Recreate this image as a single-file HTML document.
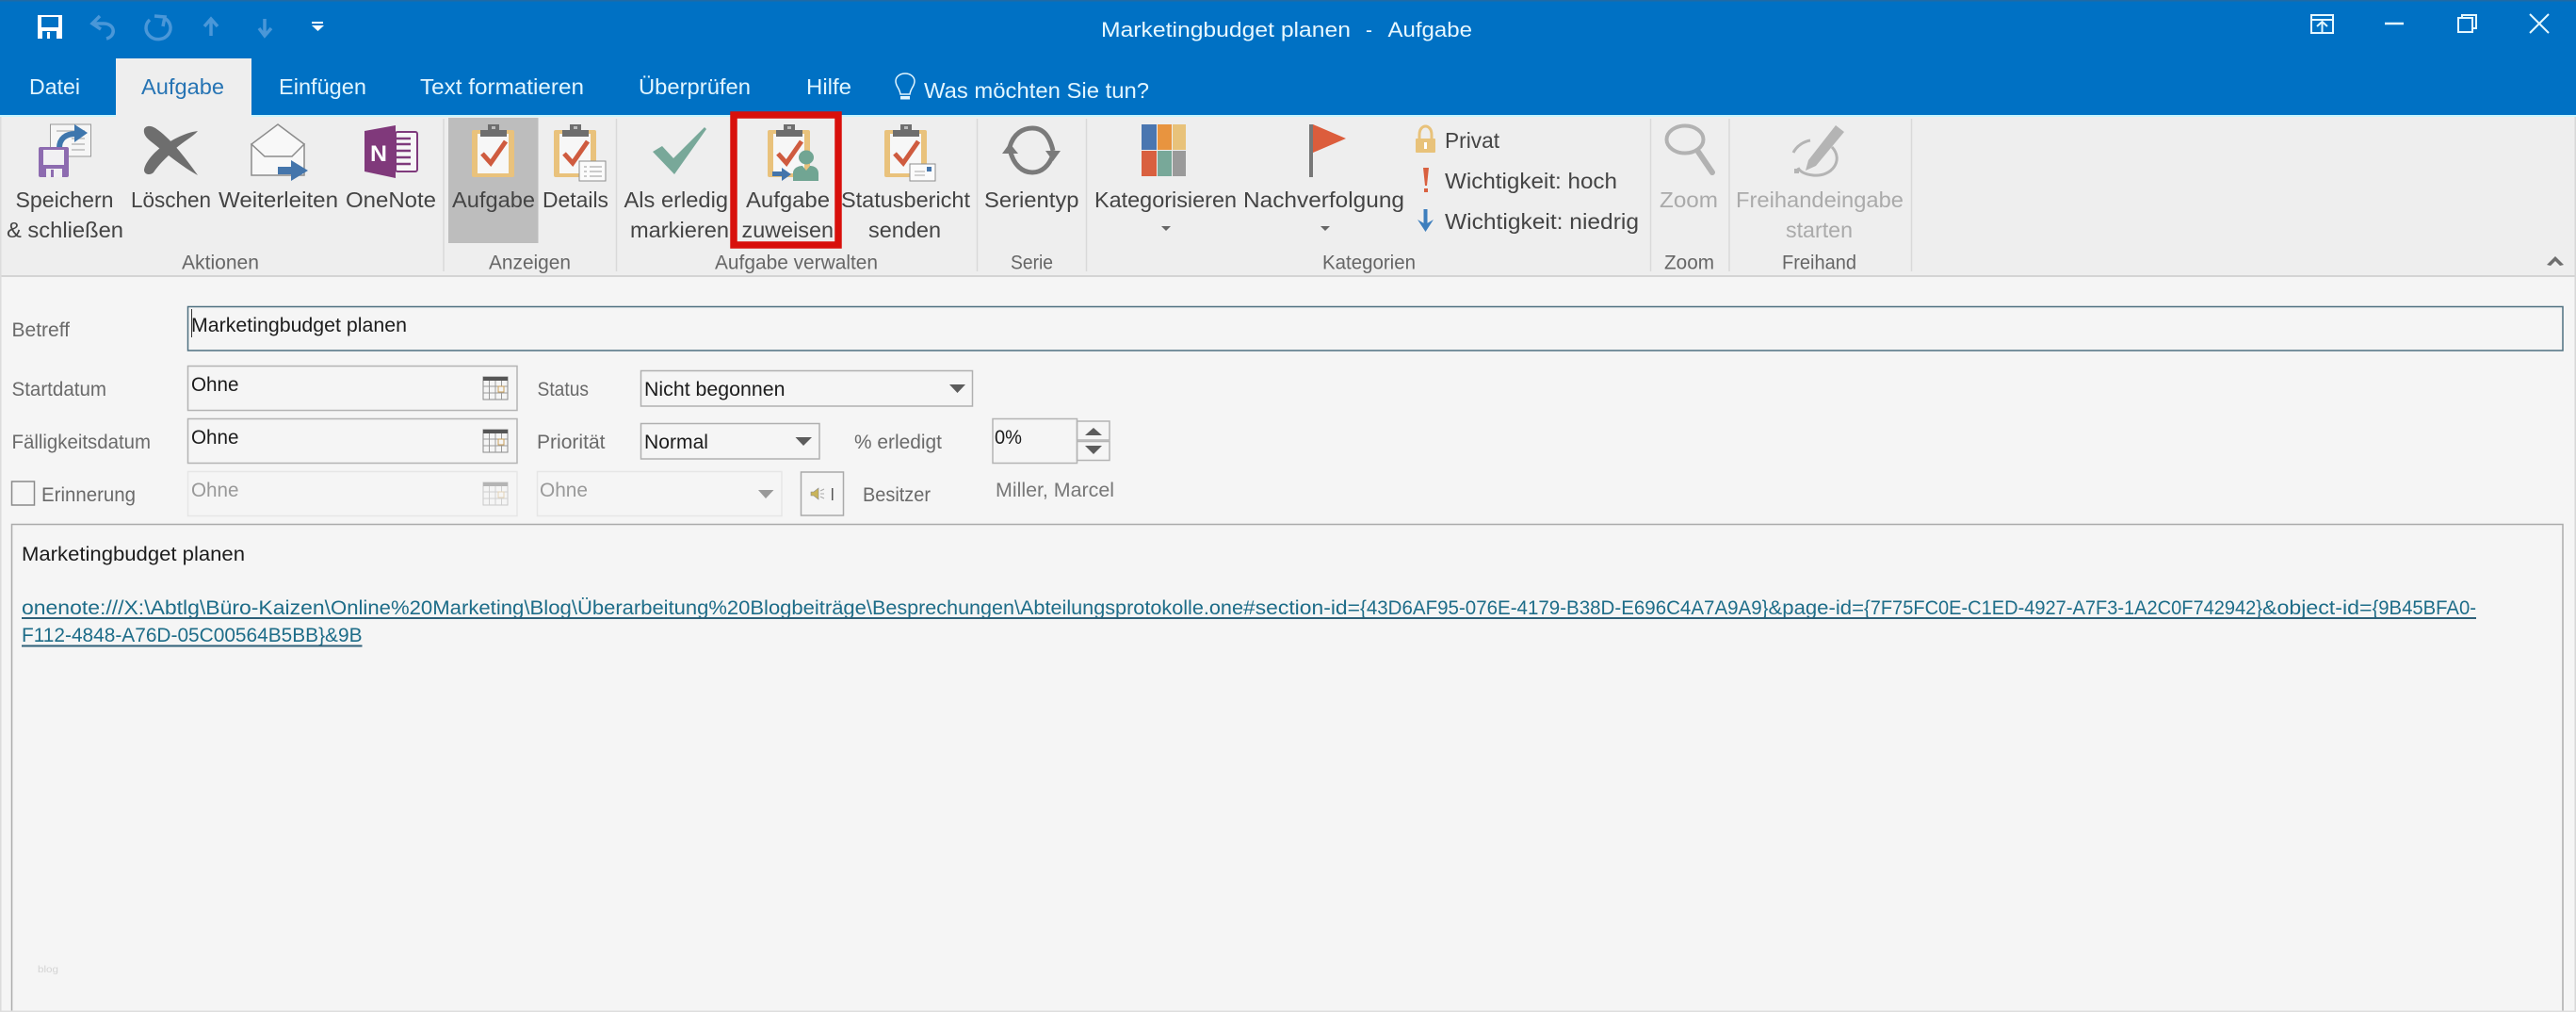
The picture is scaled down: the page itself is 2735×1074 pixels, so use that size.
<!DOCTYPE html>
<html lang="de"><head><meta charset="utf-8"><title>Marketingbudget planen - Aufgabe</title>
<style>
html,body{margin:0;padding:0;width:2735px;height:1074px;overflow:hidden;background:#f5f5f5}
svg{display:block}
text{font-family:"Liberation Sans",sans-serif;white-space:pre}
.t{font-size:23px;fill:#e2f6ff}
.r{font-size:23px;fill:#444}
.g{font-size:21px;fill:#666}
.d{font-size:23px;fill:#aaa}
.l{font-size:21px;fill:#6a6a6a}
.v{font-size:21px;fill:#1c1c1c}
.x{font-size:21px;fill:#999}
.u{font-size:21px;fill:#1d6c88}
</style></head><body>
<svg xmlns="http://www.w3.org/2000/svg" width="2735" height="1074" viewBox="0 0 2735 1074">
<defs>
<g id="clip">
<rect x="0" y="6" width="45" height="50" rx="2" fill="#e9c27c"/>
<rect x="6" y="10" width="33" height="42" fill="#f7f7f7"/>
<path d="M9 13V6H17V0H29V6H37V13Z" fill="#6e6e6e"/>
<rect x="21" y="2" width="4" height="3" fill="#bbb"/>
<path d="M11 31L20 41L36 18" fill="none" stroke="#cf5b3f" stroke-width="5"/>
</g>
<g id="cal">
<rect x="0" y="0" width="26" height="24" fill="#f5f5f5" stroke="#8a8a8a"/>
<rect x="0" y="0" width="26" height="4" fill="#555"/>
<path d="M6.5 4V24M13 4V24M19.500 4V24M0 10H26M0 17H26" stroke="#9a9a9a" fill="none"/>
<rect x="16" y="10" width="6" height="6" fill="#f5f5f5" stroke="#c9a05a"/>
</g>
</defs>

<rect width="2735" height="1074" fill="#f5f5f5"/>
<!-- title band -->
<rect width="2735" height="122" fill="#0071c4"/>
<rect width="2735" height="1.500" fill="#1f6aa5"/>
<rect y="122" width="2735" height="2" fill="#c6f5ff"/>
<rect y="124" width="2735" height="168" fill="#eeeeee"/>
<rect y="292" width="2735" height="2" fill="#d4d4d4"/>
<rect x="2733.500" y="124" width="1.500" height="950" fill="#d8d8d8"/>
<rect x="0" y="124" width="1.500" height="950" fill="#dcdcdc"/>
<rect x="123" y="62" width="144" height="63" fill="#eeeeee"/>

<!-- QAT -->
<path d="M40 16H66V41H40Z" fill="#fff"/>
<rect x="44" y="18" width="18" height="11" fill="#0071c4"/>
<rect x="45" y="33" width="15" height="8" fill="#0071c4"/>
<rect x="50" y="34" width="3" height="7" fill="#fff"/>
<g fill="none" stroke="#4a97d8" stroke-width="3.500">
<path d="M106 17L98 25L107 31"/><path d="M98 25H110C122 25 124 38 113 41"/>
<path d="M159 21A13 12 0 1 0 174 19M164 17L175 18L173 28"/>
<path d="M224 38V21M217 28L224 20L231 28"/>
<path d="M281 20V37M275 30L281 38L288 30"/>
</g>
<rect x="331" y="23" width="12" height="2" fill="#fff"/>
<path d="M331 27H344L337.500 33Z" fill="#fff"/>

<text x="1169" y="39" font-size="22.500" fill="#e8f8ff" textLength="265" lengthAdjust="spacingAndGlyphs">Marketingbudget planen</text>
<text x="1450" y="39" font-size="22.500" fill="#e8f8ff" textLength="7" lengthAdjust="spacingAndGlyphs">-</text>
<text x="1473.500" y="39" font-size="22.500" fill="#e8f8ff" textLength="89.500" lengthAdjust="spacingAndGlyphs">Aufgabe</text>

<!-- window controls -->
<g fill="none" stroke="#e4f8ff" stroke-width="2">
<rect x="2454" y="16" width="23" height="19"/><path d="M2454 21H2477M2465.500 34V24M2460 28L2465.500 23L2471 28"/>
<path d="M2532 25H2552" stroke-width="2.500"/>
<rect x="2610" y="19" width="15" height="15"/><path d="M2614 18V16H2629V30H2626"/>
<path d="M2686 15L2706 35M2706 15L2686 35"/>
</g>

<!-- tabs -->
<text class="t" x="31" y="100" textLength="54" lengthAdjust="spacingAndGlyphs">Datei</text>
<text class="t" x="150" y="100" textLength="88" lengthAdjust="spacingAndGlyphs" style="fill:#2674b4">Aufgabe</text>
<text class="t" x="296" y="100" textLength="93" lengthAdjust="spacingAndGlyphs">Einfügen</text>
<text class="t" x="446" y="100" textLength="174" lengthAdjust="spacingAndGlyphs">Text formatieren</text>
<text class="t" x="678" y="100" textLength="119" lengthAdjust="spacingAndGlyphs">Überprüfen</text>
<text class="t" x="856" y="100" textLength="48" lengthAdjust="spacingAndGlyphs">Hilfe</text>
<path d="M956 100C955 93 951 92 951 86A10 8 0 0 1 971 86C971 92 967 93 966 100Z" fill="none" stroke="#e2f6ff" stroke-width="1.500"/>
<rect x="956" y="102" width="10" height="3.500" fill="#e2f6ff"/>
<text class="t" x="981" y="104" textLength="239" lengthAdjust="spacingAndGlyphs">Was möchten Sie tun?</text>

<!-- highlighted button -->
<rect x="476" y="125" width="95.500" height="133" fill="#bdbdbd"/>

<!-- separators -->
<g stroke="#d9d9d9" stroke-width="1.500">
<path d="M471 126V288M654.500 126V288M1037.500 126V288M1153.500 126V288M1752.500 126V288M1836 126V288M2029.500 126V288"/>
</g>

<!-- save & close -->
<rect x="53.500" y="132" width="43" height="34" fill="#f6f6f6" stroke="#999"/>
<path d="M60 139H90M76 147H90M76 153H90M76 159H90" stroke="#bbb" stroke-width="1.500"/>
<path d="M63 157C63 147 70 142 80 142" fill="none" stroke="#3e76ad" stroke-width="6"/>
<path d="M79 132L93 141L79 151Z" fill="#3e76ad"/>
<rect x="41" y="156" width="32" height="32" rx="2" fill="#8d6bb0"/>
<rect x="46" y="159" width="22" height="16" fill="#f1f0f3"/>
<rect x="49" y="179" width="17" height="9" fill="#f1f0f3"/><rect x="54" y="180" width="3" height="8" fill="#8d6bb0"/>

<!-- delete X -->
<path d="M153 137C155 133 160 133 165 136C180 146 195 165 210 186C195 178 175 162 160 150C155 146 152 142 153 137Z" fill="#6e6e6e"/>
<path d="M210 139C195 141 180 150 170 157C160 165 153 175 153 181C154 186 160 186 163 183C172 170 180 165 186 158C195 150 205 145 210 139Z" fill="#6e6e6e"/>

<!-- forward -->
<path d="M267 153V186H323V153Z" fill="#f8f8f8" stroke="#8c8c8c" stroke-width="1.500"/>
<path d="M295 132L323 153L310 166H281L267 153Z" fill="#f8f8f8" stroke="#8c8c8c" stroke-width="1.500"/>
<rect x="295" y="177" width="17" height="8" fill="#4475ab"/>
<path d="M309 170L327 181L309 192Z" fill="#4475ab"/>

<!-- OneNote -->
<rect x="420" y="140" width="23" height="42" rx="2" fill="#f7f7f7" stroke="#7f3a7c" stroke-width="2"/>
<path d="M420 147H436M420 153H436M420 160H436M420 167H436M420 174H436" stroke="#7f3a7c" stroke-width="2.500"/>
<path d="M387 139L420 133V189L387 182Z" fill="#80397b"/>
<text x="393" y="171" font-size="24" font-weight="bold" fill="#fff" textLength="18" lengthAdjust="spacingAndGlyphs">N</text>

<!-- Aufgabe, Details -->
<use href="#clip" x="501" y="132"/>
<use href="#clip" x="588" y="132"/>
<rect x="615" y="171" width="28" height="21" fill="#fbfbfb" stroke="#8c8c8c"/>
<path d="M620 177H623M626 177H639M620 182H623M626 182H639M620 187H623M626 187H639" stroke="#999"/>

<!-- check -->
<path d="M693 161L703 155L715 168L748 135L750 137L716 185Z" fill="#78a899"/>

<!-- assign -->
<use href="#clip" x="815" y="132"/>
<ellipse cx="856" cy="167" rx="8" ry="7.500" fill="#71a593"/>
<path d="M842 192V184C842 178 848 176 852 176L856 181L860 176C864 176 869 178 869 184V192Z" fill="#71a593"/>
<rect x="820" y="182" width="12" height="5" fill="#4475ab"/>
<path d="M830 178L840 185L830 192Z" fill="#4475ab"/>

<!-- status -->
<use href="#clip" x="939" y="132"/>
<rect x="966" y="174" width="27" height="18" fill="#fbfbfb" stroke="#8c8c8c"/>
<rect x="984" y="177" width="5" height="5" fill="#4475ab"/>
<path d="M971 182H982M971 186H982" stroke="#aaa"/>

<!-- serie -->
<g fill="none" stroke="#7a7a7a" stroke-width="5">
<path d="M1072 156C1076 142 1086 136 1096 136C1106 136 1114 142 1118 160"/>
<path d="M1118 164C1114 176 1106 183 1096 183C1086 183 1076 176 1072 158"/>
</g>
<path d="M1110 160H1126L1118 171Z" fill="#7a7a7a"/>
<path d="M1064 163H1081L1072 152Z" fill="#7a7a7a"/>

<!-- categories -->
<rect x="1212" y="132" width="16" height="27" fill="#4a76b0"/>
<rect x="1229" y="132" width="15" height="27" fill="#e8943f"/>
<rect x="1245" y="132" width="14" height="27" fill="#e8c27a"/>
<rect x="1212" y="160" width="16" height="27" fill="#d9603f"/>
<rect x="1229" y="160" width="15" height="27" fill="#78a899"/>
<rect x="1245" y="160" width="14" height="27" fill="#9a9a9a"/>
<path d="M1233 240H1243L1238 245Z" fill="#666"/>

<!-- flag -->
<rect x="1390" y="132" width="4" height="56" fill="#777"/>
<path d="M1394 132L1429 147L1394 162Z" fill="#dc5d3c"/>
<path d="M1402 240H1412L1407 245Z" fill="#666"/>

<!-- small icons -->
<path d="M1507 148V143C1507 131 1520 131 1520 143V148" fill="none" stroke="#e8c27a" stroke-width="3"/>
<rect x="1503" y="147" width="21" height="15" rx="1" fill="#e8c27a"/>
<rect x="1512" y="151" width="3" height="7" fill="#fff"/>
<path d="M1511 178H1517L1515 197H1513Z" fill="#d9603f"/><rect x="1512" y="200" width="4" height="4" fill="#d9603f"/>
<path d="M1513.500 222V240" stroke="#3e7fbd" stroke-width="4"/>
<path d="M1505 233L1513.500 246L1522 233L1513.500 238Z" fill="#3e7fbd"/>

<!-- zoom icon -->
<ellipse cx="1789" cy="148" rx="19.500" ry="14.500" fill="none" stroke="#b2b2b2" stroke-width="4"/>
<path d="M1803 161L1818 183" stroke="#b2b2b2" stroke-width="6" stroke-linecap="round"/>

<!-- ink icon -->
<path d="M1949 133L1958 140L1928 176L1917 181L1920 170Z" fill="#b4b4b4"/>
<path d="M1904 162C1908 154 1916 150 1922 149M1945 156C1958 170 1945 188 1925 186C1916 185 1911 182 1909 178" fill="none" stroke="#b4b4b4" stroke-width="3"/>
<rect x="1905" y="179" width="5" height="5" fill="#b4b4b4"/>

<!-- ribbon text -->
<text class="r" x="16.500" y="220" textLength="104" lengthAdjust="spacingAndGlyphs">Speichern</text>
<text class="r" x="7" y="252" textLength="124" lengthAdjust="spacingAndGlyphs">&amp; schließen</text>
<text class="r" x="139" y="220" textLength="85" lengthAdjust="spacingAndGlyphs">Löschen</text>
<text class="r" x="232" y="220" textLength="127" lengthAdjust="spacingAndGlyphs">Weiterleiten</text>
<text class="r" x="367" y="220" textLength="96" lengthAdjust="spacingAndGlyphs">OneNote</text>
<text class="r" x="480" y="220" textLength="88" lengthAdjust="spacingAndGlyphs">Aufgabe</text>
<text class="r" x="576" y="220" textLength="70" lengthAdjust="spacingAndGlyphs">Details</text>
<text class="r" x="662.500" y="220" textLength="110.500" lengthAdjust="spacingAndGlyphs">Als erledig</text>
<text class="r" x="669" y="252" textLength="105" lengthAdjust="spacingAndGlyphs">markieren</text>
<text class="r" x="792" y="220" textLength="89" lengthAdjust="spacingAndGlyphs">Aufgabe</text>
<text class="r" x="787.500" y="252" textLength="97.500" lengthAdjust="spacingAndGlyphs">zuweisen</text>
<text class="r" x="893" y="220" textLength="137" lengthAdjust="spacingAndGlyphs">Statusbericht</text>
<text class="r" x="922" y="252" textLength="77" lengthAdjust="spacingAndGlyphs">senden</text>
<text class="r" x="1045" y="220" textLength="100.500" lengthAdjust="spacingAndGlyphs">Serientyp</text>
<text class="r" x="1162" y="220" textLength="151" lengthAdjust="spacingAndGlyphs">Kategorisieren</text>
<text class="r" x="1320" y="220" textLength="171" lengthAdjust="spacingAndGlyphs">Nachverfolgung</text>
<text class="r" x="1534" y="157" textLength="58" lengthAdjust="spacingAndGlyphs">Privat</text>
<text class="r" x="1534" y="200" textLength="183" lengthAdjust="spacingAndGlyphs">Wichtigkeit: hoch</text>
<text class="r" x="1534" y="243" textLength="206" lengthAdjust="spacingAndGlyphs">Wichtigkeit: niedrig</text>
<text class="d" x="1762" y="220" textLength="62" lengthAdjust="spacingAndGlyphs">Zoom</text>
<text class="d" x="1843" y="220" textLength="178" lengthAdjust="spacingAndGlyphs">Freihandeingabe</text>
<text class="d" x="1896" y="252" textLength="71" lengthAdjust="spacingAndGlyphs">starten</text>

<text class="g" x="193" y="285.500" textLength="82" lengthAdjust="spacingAndGlyphs">Aktionen</text>
<text class="g" x="519" y="285.500" textLength="87" lengthAdjust="spacingAndGlyphs">Anzeigen</text>
<text class="g" x="759" y="285.500" textLength="173" lengthAdjust="spacingAndGlyphs">Aufgabe verwalten</text>
<text class="g" x="1073" y="285.500" textLength="45" lengthAdjust="spacingAndGlyphs">Serie</text>
<text class="g" x="1404" y="285.500" textLength="99" lengthAdjust="spacingAndGlyphs">Kategorien</text>
<text class="g" x="1767" y="285.500" textLength="53" lengthAdjust="spacingAndGlyphs">Zoom</text>
<text class="g" x="1892" y="285.500" textLength="79" lengthAdjust="spacingAndGlyphs">Freihand</text>

<path d="M2704 281L2713 272L2722 281L2718 282L2713 277L2708 282Z" fill="#6e6e6e"/>

<!-- red frame -->
<rect x="779" y="122" width="111" height="138" fill="none" stroke="#d8100c" stroke-width="7.500"/>

<!-- form -->
<rect x="199.500" y="325.500" width="2521.500" height="46.500" fill="#f5f5f5" stroke="#4f7080" stroke-width="1.500"/>
<rect x="203" y="328" width="1" height="30" fill="#333"/>
<text class="l" x="12.500" y="357" textLength="61.500" lengthAdjust="spacingAndGlyphs">Betreff</text>
<text class="v" x="203" y="352" textLength="229" lengthAdjust="spacingAndGlyphs">Marketingbudget planen</text>

<rect x="199.500" y="388.500" width="349.500" height="47" fill="none" stroke="#b4b4b4" stroke-width="1.500"/>
<rect x="199.500" y="444.500" width="349.500" height="47" fill="none" stroke="#b4b4b4" stroke-width="1.500"/>
<rect x="199.500" y="500.500" width="349.500" height="47" fill="none" stroke="#e6e6e6" stroke-width="1.500"/>
<text class="l" x="12.500" y="420" textLength="100.500" lengthAdjust="spacingAndGlyphs">Startdatum</text>
<text class="l" x="12.500" y="476" textLength="147.500" lengthAdjust="spacingAndGlyphs">Fälligkeitsdatum</text>
<rect x="12.500" y="511" width="24" height="25" fill="#f5f5f5" stroke="#8a8a8a" stroke-width="1.500"/>
<text class="l" x="44" y="532" textLength="100" lengthAdjust="spacingAndGlyphs">Erinnerung</text>
<text class="v" x="203" y="415" textLength="50.500" lengthAdjust="spacingAndGlyphs">Ohne</text>
<text class="v" x="203" y="471" textLength="50.500" lengthAdjust="spacingAndGlyphs">Ohne</text>
<text class="x" x="203" y="527" textLength="50.500" lengthAdjust="spacingAndGlyphs">Ohne</text>
<use href="#cal" x="513" y="400"/><use href="#cal" x="513" y="456"/>
<use href="#cal" x="513" y="512" opacity=".4"/>

<text class="l" x="570.500" y="420" textLength="54.500" lengthAdjust="spacingAndGlyphs">Status</text>
<rect x="680.500" y="393.500" width="352" height="37.500" fill="none" stroke="#b0b0b0" stroke-width="1.500"/>
<text class="v" x="684" y="420" textLength="149.500" lengthAdjust="spacingAndGlyphs">Nicht begonnen</text>
<path d="M1008 408H1025L1016.500 417Z" fill="#5c5c5c"/>

<text class="l" x="570" y="476" textLength="72.500" lengthAdjust="spacingAndGlyphs">Priorität</text>
<rect x="680.500" y="449.500" width="189.500" height="37.500" fill="none" stroke="#b0b0b0" stroke-width="1.500"/>
<text class="v" x="684" y="476" textLength="68" lengthAdjust="spacingAndGlyphs">Normal</text>
<path d="M844.500 464H862L853 473Z" fill="#5c5c5c"/>
<text class="l" x="907" y="476" textLength="93" lengthAdjust="spacingAndGlyphs">% erledigt</text>

<rect x="1054" y="444.500" width="89.500" height="47" fill="none" stroke="#b4b4b4" stroke-width="1.500"/>
<text class="v" x="1056" y="471" textLength="29" lengthAdjust="spacingAndGlyphs">0%</text>
<rect x="1143.500" y="447" width="34.500" height="20" fill="none" stroke="#b4b4b4" stroke-width="1.500"/>
<rect x="1143.500" y="468.500" width="34.500" height="20" fill="none" stroke="#b4b4b4" stroke-width="1.500"/>
<path d="M1152 462H1170L1161 454Z" fill="#5c5c5c"/>
<path d="M1152 473H1170L1161 482Z" fill="#5c5c5c"/>

<rect x="570.500" y="500.500" width="259.500" height="47" fill="none" stroke="#e6e6e6" stroke-width="1.500"/>
<text class="x" x="573" y="527" textLength="51" lengthAdjust="spacingAndGlyphs">Ohne</text>
<path d="M805 520H821.500L813 529Z" fill="#999"/>

<rect x="850.500" y="501" width="45" height="46" fill="none" stroke="#aaa" stroke-width="1.500"/>
<path d="M861 522H864L869 518V530L864 526H861Z" fill="#c9b45a" stroke="#888" stroke-width=".6"/>
<path d="M871 521L875 519M871 524H875M871 527L875 529" stroke="#aaa"/>
<rect x="883" y="518" width="1.500" height="13" fill="#555"/>
<text class="l" x="916" y="532" textLength="72" lengthAdjust="spacingAndGlyphs">Besitzer</text>
<text class="l" x="1057" y="527" textLength="126" lengthAdjust="spacingAndGlyphs" style="fill:#777">Miller, Marcel</text>

<!-- body -->
<path d="M12.500 1074V556.500H2721V1074" fill="none" stroke="#ababab" stroke-width="1.500"/>
<rect x="0" y="1072.500" width="2735" height="1.500" fill="#dedede"/>
<text class="v" x="23" y="595" textLength="237" lengthAdjust="spacingAndGlyphs">Marketingbudget planen</text>

<text class="u" x="23" y="652" textLength="328" lengthAdjust="spacingAndGlyphs">onenote:///X:\Abtlg\Büro-Kaizen\</text>
<text class="u" x="351" y="652" textLength="211.500" lengthAdjust="spacingAndGlyphs">Online%20Marketing\</text>
<text class="u" x="562.500" y="652" textLength="50.500" lengthAdjust="spacingAndGlyphs">Blog\</text>
<text class="u" x="613" y="652" textLength="313" lengthAdjust="spacingAndGlyphs">Überarbeitung%20Blogbeiträge\</text>
<text class="u" x="926" y="652" textLength="157" lengthAdjust="spacingAndGlyphs">Besprechungen\</text>
<text class="u" x="1083" y="652" textLength="237" lengthAdjust="spacingAndGlyphs">Abteilungsprotokolle.one</text>
<text class="u" x="1320" y="652" textLength="124" lengthAdjust="spacingAndGlyphs">#section-id=</text>
<text class="u" x="1444" y="652" textLength="433.500" lengthAdjust="spacingAndGlyphs">{43D6AF95-076E-4179-B38D-E696C4A7A9A9}</text>
<text class="u" x="1877.500" y="652" textLength="101.500" lengthAdjust="spacingAndGlyphs">&amp;page-id=</text>
<text class="u" x="1979" y="652" textLength="423" lengthAdjust="spacingAndGlyphs">{7F75FC0E-C1ED-4927-A7F3-1A2C0F742942}</text>
<text class="u" x="2402" y="652" textLength="116.500" lengthAdjust="spacingAndGlyphs">&amp;object-id=</text>
<text class="u" x="2518.500" y="652" textLength="110.500" lengthAdjust="spacingAndGlyphs">{9B45BFA0-</text>
<rect x="23" y="655" width="2606" height="2" fill="#2f6078"/>
<text class="u" x="23" y="681" textLength="361.500" lengthAdjust="spacingAndGlyphs">F112-4848-A76D-05C00564B5BB}&amp;9B</text>
<rect x="23" y="684.500" width="361.500" height="2" fill="#2f6078"/>
<text x="40" y="1032" font-size="10" fill="#d4d4d4" textLength="22" lengthAdjust="spacingAndGlyphs">blog</text>
</svg>
</body></html>
